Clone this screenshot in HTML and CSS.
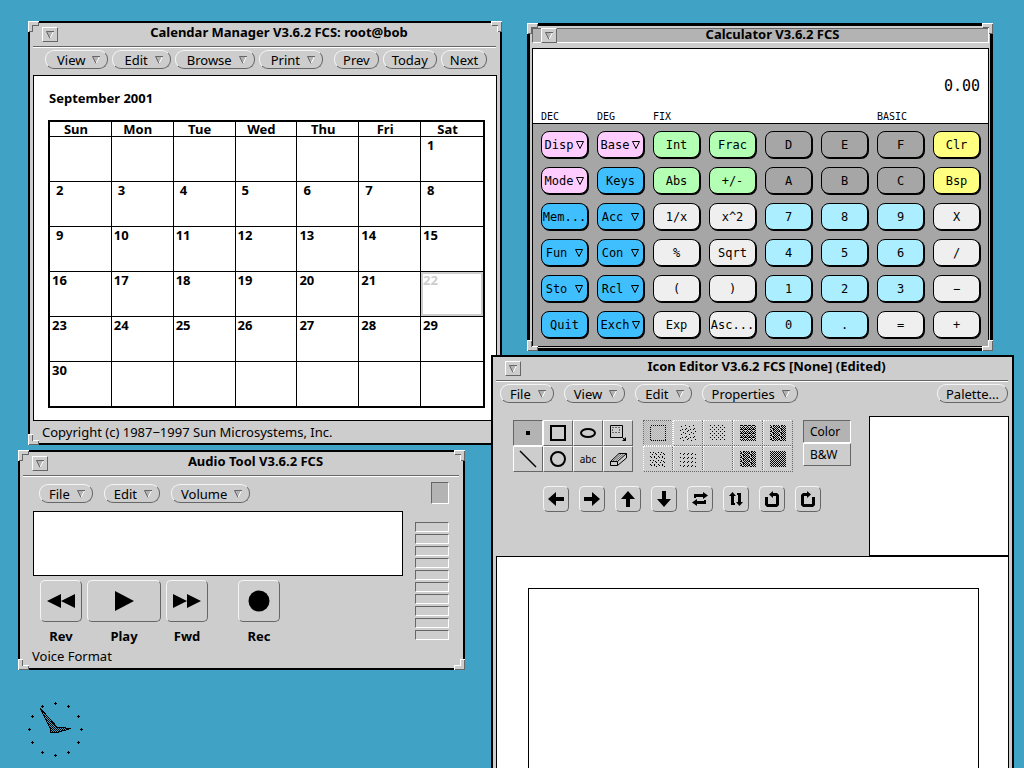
FILE: index.html
```html
<!DOCTYPE html>
<html lang="en">
<head>
<meta charset="utf-8">
<title>Desktop</title>
<link rel="stylesheet" href="styles.css">
</head>
<body>
<svg class="defs" aria-hidden="true">
  <defs>
    <symbol id="tri" viewBox="0 0 8 8"><path d="M0 0H8L4 8Z" fill="#b3b3b3"/><path d="M7.5 0.5L4 7.5" stroke="#fff" fill="none"/><path d="M8 .5H.5L4 7.5" stroke="#666" fill="none"/></symbol>
    <symbol id="ktri" viewBox="0 0 8 8"><path d="M.5 .5H7.500L4 7.500Z" fill="none" stroke="#000"/></symbol>
    <symbol id="c-tl" viewBox="0 0 11 11"><path d="M0 0H11V5H5V11H0Z" fill="#cdcdcd"/><path d="M11 .5H.5V11" fill="none" stroke="#fff"/><path d="M10.500 1V4.500H4.500V10.500H1" fill="none" stroke="#666"/></symbol>
    <symbol id="c-tr" viewBox="0 0 11 11"><path d="M0 0H11V11H6V5H0Z" fill="#cdcdcd"/><path d="M0 .5H11M.5 0V4M6.500 5V11" fill="none" stroke="#fff"/><path d="M1 4.500H6.500M10.500 1V10.500H7" fill="none" stroke="#666"/></symbol>
    <symbol id="c-bl" viewBox="0 0 11 11"><path d="M0 0H5V6H11V11H0Z" fill="#cdcdcd"/><path d="M.5 11V.5H5M5 6.500H11" fill="none" stroke="#fff"/><path d="M4.500 1V6.500M10.500 7V10.500H1" fill="none" stroke="#666"/></symbol>
    <symbol id="c-br" viewBox="0 0 11 11"><path d="M11 0H6V6H0V11H11Z" fill="#cdcdcd"/><path d="M11 .5H6.500V6.500H.5V11" fill="none" stroke="#fff"/><path d="M10.500 1V10.500H1" fill="none" stroke="#666"/></symbol>
    <pattern id="checker" width="2" height="2" patternUnits="userSpaceOnUse"><path d="M0 0h1v1H0zM1 1h1v1H1z"/></pattern>
    <pattern id="p1" width="8" height="8" patternUnits="userSpaceOnUse"><path d="M1 0h1v1H1zM5 1h1v1H5zM3 3h1v1H3zM7 2h1v1H7zM0 5h1v1H0zM4 6h1v1H4zM7 6h1v1H7zM2 7h1v1H2z"/></pattern>
    <pattern id="p2" width="4" height="4" patternUnits="userSpaceOnUse"><path d="M0 0h1v1H0zM2 2h1v1H2z"/></pattern>
    <pattern id="p3" width="4" height="4" patternUnits="userSpaceOnUse"><path d="M0 0h1v1H0zM2 0h1v1H2zM1 1h1v1H1zM3 1h1v1H3zM0 2h1v1H0zM2 2h2v1H2zM1 3h1v1H1z"/></pattern>
    <pattern id="p4" width="8" height="4" patternUnits="userSpaceOnUse"><path d="M0 0h1v1H0zM2 0h2v1H2zM6 0h1v1H6zM1 1h1v1H1zM4 1h2v1H4zM7 1h1v1H7zM0 2h1v1H0zM2 2h1v1H2zM5 2h2v1H5zM1 3h1v1H1zM3 3h1v1H3zM5 3h1v1H5zM7 3h1v1H7z"/></pattern>
    <pattern id="p5" width="8" height="8" patternUnits="userSpaceOnUse"><path d="M0 1h1v1H0zM3 0h1v1H3zM6 0h1v1H6zM5 3h1v1H5zM2 3h1v1H2zM7 4h1v1H7zM0 5h1v1H0zM4 5h1v1H4zM2 7h1v1H2zM6 7h1v1H6z"/></pattern>
    <pattern id="p6" width="4" height="4" patternUnits="userSpaceOnUse"><path d="M2 0h1v1H2zM1 1h1v1H1z"/></pattern>
  </defs>
</svg>

<main class="desktop">

<section class="window calendar" aria-label="Calendar Manager">
  <header class="titlebar">
    <button class="winmenu" aria-label="Window menu"><svg class="tri"><use href="#tri"/></svg></button>
    <h1 class="title">Calendar Manager V3.6.2 FCS: root@bob</h1>
  </header>
  <hr class="rule">
  <nav class="toolbar">
    <button class="menu wide">View<svg class="tri"><use href="#tri"/></svg></button>
    <button class="menu wide">Edit<svg class="tri"><use href="#tri"/></svg></button>
    <button class="menu wide">Browse<svg class="tri"><use href="#tri"/></svg></button>
    <button class="menu wide">Print<svg class="tri"><use href="#tri"/></svg></button>
    <button class="menu prev">Prev</button>
    <button class="menu plain">Today</button>
    <button class="menu plain">Next</button>
  </nav>
  <div class="pane">
    <h2 class="month">September 2001</h2>
    <table class="days">
      <thead><tr><th>Sun</th><th>Mon</th><th>Tue</th><th>Wed</th><th>Thu</th><th>Fri</th><th>Sat</th></tr></thead>
      <tbody>
        <tr><td></td><td></td><td></td><td></td><td></td><td></td><td class="one">1</td></tr>
        <tr class="one"><td>2</td><td>3</td><td>4</td><td>5</td><td>6</td><td>7</td><td>8</td></tr>
        <tr><td class="one">9</td><td>10</td><td>11</td><td>12</td><td>13</td><td>14</td><td>15</td></tr>
        <tr><td>16</td><td>17</td><td>18</td><td>19</td><td>20</td><td>21</td><td class="today">22</td></tr>
        <tr><td>23</td><td>24</td><td>25</td><td>26</td><td>27</td><td>28</td><td>29</td></tr>
        <tr><td>30</td><td></td><td></td><td></td><td></td><td></td><td></td></tr>
      </tbody>
    </table>
  </div>
  <footer class="status">Copyright (c) 1987−1997 Sun Microsystems, Inc.</footer>
  <svg class="corner tl"><use href="#c-tl"/></svg><svg class="corner tr"><use href="#c-tr"/></svg><svg class="corner bl"><use href="#c-bl"/></svg><svg class="corner br"><use href="#c-br"/></svg>
</section>

<section class="window calculator" aria-label="Calculator">
  <header class="titlebar active">
    <button class="winmenu" aria-label="Window menu"><svg class="tri"><use href="#tri"/></svg></button>
    <h1 class="title">Calculator V3.6.2 FCS</h1>
  </header>
  <div class="calc">
    <div class="display">
      <output class="value">0.00</output>
      <div class="modes"><span>DEC</span><span>DEG</span><span>FIX</span><span class="basic">BASIC</span></div>
    </div>
    <div class="keys">
      <button class="key pink">Disp<svg class="tri"><use href="#ktri"/></svg></button><button class="key pink">Base<svg class="tri"><use href="#ktri"/></svg></button><button class="key green">Int</button><button class="key green">Frac</button><button class="key gray">D</button><button class="key gray">E</button><button class="key gray">F</button><button class="key yellow">Clr</button>
      <button class="key pink">Mode<svg class="tri"><use href="#ktri"/></svg></button><button class="key blue">Keys</button><button class="key green">Abs</button><button class="key green">+/-</button><button class="key gray">A</button><button class="key gray">B</button><button class="key gray">C</button><button class="key yellow">Bsp</button>
      <button class="key blue">Mem...</button><button class="key blue short">Acc<svg class="tri"><use href="#ktri"/></svg></button><button class="key">1/x</button><button class="key">x^2</button><button class="key cyan">7</button><button class="key cyan">8</button><button class="key cyan">9</button><button class="key">X</button>
      <button class="key blue short">Fun<svg class="tri"><use href="#ktri"/></svg></button><button class="key blue short">Con<svg class="tri"><use href="#ktri"/></svg></button><button class="key">%</button><button class="key">Sqrt</button><button class="key cyan">4</button><button class="key cyan">5</button><button class="key cyan">6</button><button class="key">/</button>
      <button class="key blue short">Sto<svg class="tri"><use href="#ktri"/></svg></button><button class="key blue short">Rcl<svg class="tri"><use href="#ktri"/></svg></button><button class="key">(</button><button class="key">)</button><button class="key cyan">1</button><button class="key cyan">2</button><button class="key cyan">3</button><button class="key">−</button>
      <button class="key blue">Quit</button><button class="key blue">Exch<svg class="tri"><use href="#ktri"/></svg></button><button class="key">Exp</button><button class="key">Asc...</button><button class="key cyan">0</button><button class="key cyan">.</button><button class="key">=</button><button class="key">+</button>
    </div>
  </div>
  <svg class="corner tl"><use href="#c-tl"/></svg><svg class="corner tr"><use href="#c-tr"/></svg><svg class="corner bl"><use href="#c-bl"/></svg><svg class="corner br"><use href="#c-br"/></svg>
</section>

<section class="window audio" aria-label="Audio Tool">
  <header class="titlebar">
    <button class="winmenu" aria-label="Window menu"><svg class="tri"><use href="#tri"/></svg></button>
    <h1 class="title">Audio Tool V3.6.2 FCS</h1>
  </header>
  <hr class="rule">
  <nav class="toolbar">
    <button class="menu">File<svg class="tri"><use href="#tri"/></svg></button>
    <button class="menu">Edit<svg class="tri"><use href="#tri"/></svg></button>
    <button class="menu">Volume<svg class="tri"><use href="#tri"/></svg></button>
    <div class="drop"></div>
  </nav>
  <div class="deck">
    <div class="deck-main">
      <div class="wave"></div>
      <div class="transport">
        <label class="ctl"><button class="tbtn"><svg width="28" height="14" viewBox="0 0 28 14"><path d="M0 7L14 0V14ZM14 7L28 0V14Z"/></svg></button><span>Rev</span></label>
        <label class="ctl play"><button class="tbtn"><svg width="20" height="20" viewBox="0 0 20 20"><path d="M1 0L20 10L1 20Z"/></svg></button><span>Play</span></label>
        <label class="ctl"><button class="tbtn"><svg width="28" height="14" viewBox="0 0 28 14"><path d="M0 0L14 7L0 14ZM14 0L28 7L14 14Z"/></svg></button><span>Fwd</span></label>
        <label class="ctl rec"><button class="tbtn"><svg width="22" height="22" viewBox="0 0 22 22"><circle cx="11" cy="11" r="10.500"/></svg></button><span>Rec</span></label>
      </div>
    </div>
    <div class="meter"><i></i><i></i><i></i><i></i><i></i><i></i><i></i><i></i><i></i><i></i></div>
  </div>
  <footer class="status">Voice Format</footer>
  <svg class="corner tl"><use href="#c-tl"/></svg><svg class="corner tr"><use href="#c-tr"/></svg><svg class="corner bl"><use href="#c-bl"/></svg><svg class="corner br"><use href="#c-br"/></svg>
</section>

<section class="window editor" aria-label="Icon Editor">
  <header class="titlebar">
    <button class="winmenu" aria-label="Window menu"><svg class="tri"><use href="#tri"/></svg></button>
    <h1 class="title">Icon Editor V3.6.2 FCS [None] (Edited)</h1>
  </header>
  <hr class="rule">
  <nav class="toolbar">
    <button class="menu">File<svg class="tri"><use href="#tri"/></svg></button>
    <button class="menu">View<svg class="tri"><use href="#tri"/></svg></button>
    <button class="menu">Edit<svg class="tri"><use href="#tri"/></svg></button>
    <button class="menu">Properties<svg class="tri"><use href="#tri"/></svg></button>
    <button class="menu palette">Palette...</button>
  </nav>
  <div class="controls">
    <div class="tools">
      <div class="choices">
        <div class="grid shapes">
          <button class="cell on" aria-label="Point"><svg class="ico"><path d="M8 8h4v4H8z"/></svg></button>
          <button class="cell" aria-label="Square"><svg class="ico"><path d="M3 3h14v14H3z" fill="none" stroke="#000" stroke-width="2"/></svg></button>
          <button class="cell" aria-label="Ellipse"><svg class="ico"><ellipse cx="10" cy="10" rx="7" ry="4" fill="none" stroke="#000" stroke-width="2"/></svg></button>
          <button class="cell" aria-label="Region"><svg class="ico"><path d="M2.500 2.500h12v12h-12zM14.500 14.500L18 18" fill="none" stroke="#000"/><path d="M4.500 4.500h7v5h-7z" fill="none" stroke="#000" stroke-dasharray="1 2"/><path d="M18 14v4h-4z"/></svg></button>
          <button class="cell" aria-label="Line"><svg class="ico"><path d="M2 2L18 18" stroke="#000" stroke-width="1.500"/></svg></button>
          <button class="cell" aria-label="Circle"><svg class="ico"><circle cx="10" cy="10" r="7" fill="none" stroke="#000" stroke-width="2"/></svg></button>
          <button class="cell abc">abc</button>
          <button class="cell" aria-label="Erase"><svg class="ico"><path d="M2.500 12.500L11 4.500H18.500L9.500 12.500ZM2.500 12.500V16.500H9.500V12.500M9.500 16.500L18.500 9V4.500" fill="none" stroke="#000"/><path d="M5 12L13 5M7.500 12L15.500 5" fill="none" stroke="#000" stroke-width=".5"/></svg></button>
        </div>
        <div class="grid fills">
          <button class="cell on" aria-label="No fill"><svg class="ico px"><path d="M2.500 2.500h15v15h-15z" fill="none" stroke="#000" stroke-dasharray="1 1"/></svg></button>
          <button class="cell" aria-label="Fill 1"><svg class="ico px"><rect x="2" y="2" width="16" height="16" fill="url(#p1)"/></svg></button>
          <button class="cell" aria-label="Fill 2"><svg class="ico px"><rect x="2" y="2" width="16" height="16" fill="url(#p2)"/></svg></button>
          <button class="cell" aria-label="Fill 3"><svg class="ico px"><rect x="2" y="2" width="16" height="16" fill="url(#p3)"/></svg></button>
          <button class="cell" aria-label="Fill 4"><svg class="ico px"><rect x="2" y="2" width="16" height="16" fill="url(#p4)"/></svg></button>
          <button class="cell" aria-label="Fill 5"><svg class="ico px"><rect x="2" y="2" width="16" height="16" fill="url(#p5)"/></svg></button>
          <button class="cell" aria-label="Fill 6"><svg class="ico px"><rect x="2" y="2" width="16" height="16" fill="url(#p6)"/></svg></button>
          <button class="cell" aria-label="White fill"></button>
          <button class="cell" aria-label="Fill 8"><svg class="ico px"><rect x="2" y="2" width="16" height="16" fill="url(#p4)"/></svg></button>
          <button class="cell" aria-label="Fill 9"><svg class="ico px"><rect x="2" y="2" width="16" height="16" fill="url(#checker)"/></svg></button>
        </div>
        <div class="modes-list"><button class="cell on">Color</button><button class="cell">B&amp;W</button></div>
      </div>
      <div class="moves">
        <button class="move" aria-label="Left"><svg class="arrow"><path d="M0 8L8 1V6H16V10H8V15Z"/></svg></button>
        <button class="move" aria-label="Right"><svg class="arrow"><path d="M16 8L8 1V6H0V10H8V15Z"/></svg></button>
        <button class="move" aria-label="Up"><svg class="arrow"><path d="M8 0L15 8H10V16H6V8H1Z"/></svg></button>
        <button class="move" aria-label="Down"><svg class="arrow"><path d="M8 16L15 8H10V0H6V8H1Z"/></svg></button>
        <button class="move" aria-label="Flip horizontally"><svg class="arrow"><path d="M2 3H11V1L16 4.500L11 8V6H4V7H2ZM14 13H5V15L0 11.500L5 8V10H12V9H14Z"/></svg></button>
        <button class="move" aria-label="Flip vertically"><svg class="arrow"><path d="M3 14V5H1L4.500 1L8 5H6V12H7V14ZM13 2V11H15L11.500 15L8 11H10V4H9V2Z"/></svg></button>
        <button class="move" aria-label="Rotate left"><svg class="arrow"><path d="M9 0V2H13L15 4V14L13 16H3L1 14V6H4V13H12V5H9V7L5 3.500Z"/></svg></button>
        <button class="move" aria-label="Rotate right"><svg class="arrow"><path d="M7 0V2H3L1 4V14L3 16H13L15 14V6H12V13H4V5H7V7L11 3.500Z"/></svg></button>
      </div>
    </div>
    <div class="preview"></div>
  </div>
  <div class="canvas"><div class="sheet"></div></div>
</section>

<svg class="clock" viewBox="0 0 56 56" role="img" aria-label="Clock">
  <path d="M27 1.500h3M28.500 0v3M40 4.500h3M41.500 3v3M50 14.500h3M51.500 13v3M53 27.500h3M54.500 26v3M50 40.500h3M51.500 39v3M40 50.500h3M41.500 49v3M27 53.500h3M28.500 52v3M14 50.500h3M15.500 49v3M4 40.500h3M5.500 39v3M1 27.500h3M2.500 26v3M4 14.500h3M5.500 13v3M14 4.500h3M15.500 3v3" stroke="#000"/>
  <path d="M13 6L30 25L44 26.500L30 30.500L24 31L23 26Z" fill="url(#checker)" stroke="#000"/>
</svg>
</main>
</body>
</html>
```
FILE: styles.css
```css
* { box-sizing: border-box; }

body {
  margin: 0;
  background: #40a2c5;
  color: #000;
  font: 13px/16px "Noto Sans", "Open Sans", sans-serif;
}

button {
  margin: 0;
  padding: 0;
  font: inherit;
  color: inherit;
  background: none;
  border: 0;
}

h1, h2 { margin: 0; font-size: 13px; line-height: 16px; font-weight: 700; }

.defs { position: absolute; width: 0; height: 0; }
.desktop { position: relative; height: 100vh; overflow: hidden; }

/* Window frames, freely placed on the desktop */
.window {
  position: absolute;
  display: flex;
  flex-direction: column;
  background: #cdcdcd;
  border: 2px solid #000;
}
.calendar { left: 28px; top: 21px; width: 474px; }
.calculator { left: 527px; top: 23px; width: 466px; border-width: 3px; }
.audio { left: 18px; top: 450px; width: 447px; }
.editor { left: 491px; top: 355px; bottom: 0; width: 523px; border-bottom: 0; }

.corner { position: absolute; width: 11px; height: 11px; shape-rendering: crispEdges; }
.tl { left: -2px; top: -2px; }
.tr { right: -2px; top: -2px; }
.bl { left: -2px; bottom: -2px; }
.br { right: -2px; bottom: -2px; }
.calculator .tl { left: -3px; top: -3px; }
.calculator .tr { right: -3px; top: -3px; }
.calculator .bl { left: -3px; bottom: -3px; }
.calculator .br { right: -3px; bottom: -3px; }

.titlebar { display: flex; align-items: center; height: 23px; padding-left: 12px; }
.titlebar.active {
  height: 15px;
  margin: 2px 1px 5px 2px;
  padding-left: 8px;
  background: #b3b3b3;
  border: 1px solid #666;
  border-right-color: #fff;
  border-bottom-color: #fff;
}
.title { flex: 1; align-self: flex-start; line-height: 19px; text-align: center; }
.active .title { line-height: 11px; }
.winmenu {
  display: flex;
  align-items: center;
  justify-content: center;
  width: 16px;
  height: 15px;
  background: #cdcdcd;
  border: 1px solid #fff;
  border-right-color: #666;
  border-bottom-color: #666;
}
.tri { flex: none; width: 8px; height: 8px; }
.rule { width: auto; margin: 0 4px 0 3px; border: 0; border-top: 1px solid #666; border-bottom: 1px solid #fff; }

.toolbar { display: flex; gap: 4px; padding: 2px 12px 6px 15px; }
.menu {
  display: flex;
  align-items: center;
  gap: 7px;
  height: 19px;
  padding: 0 9px;
  border: 1px solid #f4f4f4;
  border-right-color: #666;
  border-bottom-color: #666;
  border-radius: 9px;
}
.menu .tri { margin-right: -2px; }
.menu.wide { padding-left: 11px; }
.prev { margin-left: 7px; }
.prev, .plain { padding: 0 8px; }

/* Calendar */
.pane { margin: 0 3px; padding: 14px 11px 12px 14px; background: #fff; border: 1px solid #000; }
.month { margin-bottom: 14px; padding-left: 1px; }
.days {
  width: 100%;
  table-layout: fixed;
  border: 2px solid #000;
  border-spacing: 0;
  font-weight: 700;
}
.days th, .days td { padding: 0; border-right: 1px solid #000; border-bottom: 1px solid #000; }
.days th { height: 15px; padding-right: 9px; line-height: 14px; }
.days td { height: 45px; padding-left: 2px; line-height: 16px; vertical-align: top; }
.days .one, .days .one td { padding-left: 6px; }
.days tr > :last-child { border-right: 0; }
.days tbody tr:last-child td { height: 44px; border-bottom: 0; }
.days .today { color: #cdcdcd; box-shadow: inset 0 0 0 2px #cdcdcd; }
.status { padding: 3px 12px; }

/* Calculator */
.calc {
  margin: 0 1px 1px 2px;
  background: #a6a6a6;
  border: 1px solid #000;
  font-family: "DejaVu Sans Mono", monospace;
  font-size: 12px;
}
.display {
  display: flex;
  flex-direction: column;
  height: 75px;
  padding: 0 8px;
  background: #fff;
  border-bottom: 1px solid #000;
}
.value { margin-top: auto; font-size: 15px; line-height: 20px; text-align: right; }
.modes {
  display: grid;
  grid-template-columns: repeat(8, 1fr);
  column-gap: 9px;
  margin-top: 15px;
  font-size: 10px;
  line-height: 12px;
}
.basic { grid-column: 7; }
.keys { display: grid; grid-template-columns: repeat(8, 1fr); gap: 9px; padding: 7px 8px 8px; }
.key {
  display: flex;
  align-items: center;
  justify-content: center;
  gap: 3px;
  min-width: 0;
  height: 27px;
  background: #efefef;
  border: 1px solid #000;
  border-radius: 8px;
  box-shadow: 1px 1px 0 #000;
}
.short { gap: 8px; }
.pink { background: #ffccff; }
.green { background: #b3ffb3; }
.gray { background: #a6a6a6; }
.yellow { background: #ffff80; }
.blue { background: #40bfff; }
.cyan { background: #aaeeff; }

/* Audio tool */
.audio .toolbar { gap: 11px; padding: 5px 14px 7px 19px; }
.audio .menu { margin-top: 2px; }
.drop {
  width: 18px;
  height: 22px;
  margin-left: auto;
  background: #b3b3b3;
  border: 1px solid #666;
  border-right-color: #fff;
  border-bottom-color: #fff;
}
.deck { display: flex; gap: 12px; padding: 0 14px 0 13px; }
.deck-main { flex: 1; }
.wave { height: 65px; background: #fff; border: 1px solid #000; }
.transport { display: flex; gap: 5px; padding: 4px 0 0 7px; font-weight: 700; }
.ctl { display: flex; flex-direction: column; gap: 6px; width: 42px; text-align: center; }
.play { width: 74px; }
.rec { margin-left: 25px; }
.tbtn {
  display: flex;
  align-items: center;
  justify-content: center;
  height: 42px;
  border: 1px solid #f4f4f4;
  border-right-color: #666;
  border-bottom-color: #666;
  border-radius: 5px;
}
.meter { display: flex; flex-direction: column; gap: 2px; width: 34px; padding-top: 11px; }
.meter i { height: 10px; border: 1px solid #666; border-right-color: #fff; border-bottom-color: #fff; }
.audio .status { padding: 4px 12px; }

/* Icon editor */
.editor .toolbar { gap: 10px; padding: 2px 4px 13px 7px; }
.palette { margin-left: auto; padding: 0 8px; }
.controls { display: flex; justify-content: space-between; padding: 0 3px 0 20px; }
.tools { padding-top: 4px; }
.choices { display: flex; align-items: flex-start; gap: 10px; }
.grid { display: grid; grid-template-columns: repeat(4, 30px); }
.fills { grid-template-columns: repeat(5, 30px); }
.cell {
  display: flex;
  align-items: center;
  justify-content: center;
  height: 26px;
  border: 1px solid #fff;
  border-right-color: #666;
  border-bottom-color: #666;
}
.cell.on { background: #b3b3b3; border-color: #666 #fff #fff #666; }
.fills .cell { border-style: dotted; }
.fills .on { background: repeating-conic-gradient(#b3b3b3 0 25%, #cdcdcd 0 50%) 0 0 / 2px 2px; }
.abc { font-size: 10px; }
.ico { width: 20px; height: 20px; }
.px { shape-rendering: crispEdges; }
.modes-list { display: flex; flex-direction: column; width: 48px; }
.modes-list .cell { height: 23px; padding-left: 6px; justify-content: flex-start; font-size: 12px; }
.moves { display: flex; gap: 10px; padding: 14px 0 0 30px; }
.move {
  display: flex;
  align-items: center;
  justify-content: center;
  width: 26px;
  height: 26px;
  border: 1px solid #f4f4f4;
  border-right-color: #666;
  border-bottom-color: #666;
  border-radius: 5px;
}
.arrow { width: 16px; height: 16px; }
.preview { width: 140px; height: 140px; background: #fff; border: 1px solid #000; }
.canvas {
  display: flex;
  flex: 1;
  margin: 0 3px;
  padding: 31px 29px 0 31px;
  background: #fff;
  border: 1px solid #000;
  border-bottom: 0;
}
.sheet { flex: 1; border: 1px solid #000; border-bottom: 0; }

.clock { position: absolute; left: 27px; top: 702px; width: 56px; height: 56px; shape-rendering: crispEdges; }
```
